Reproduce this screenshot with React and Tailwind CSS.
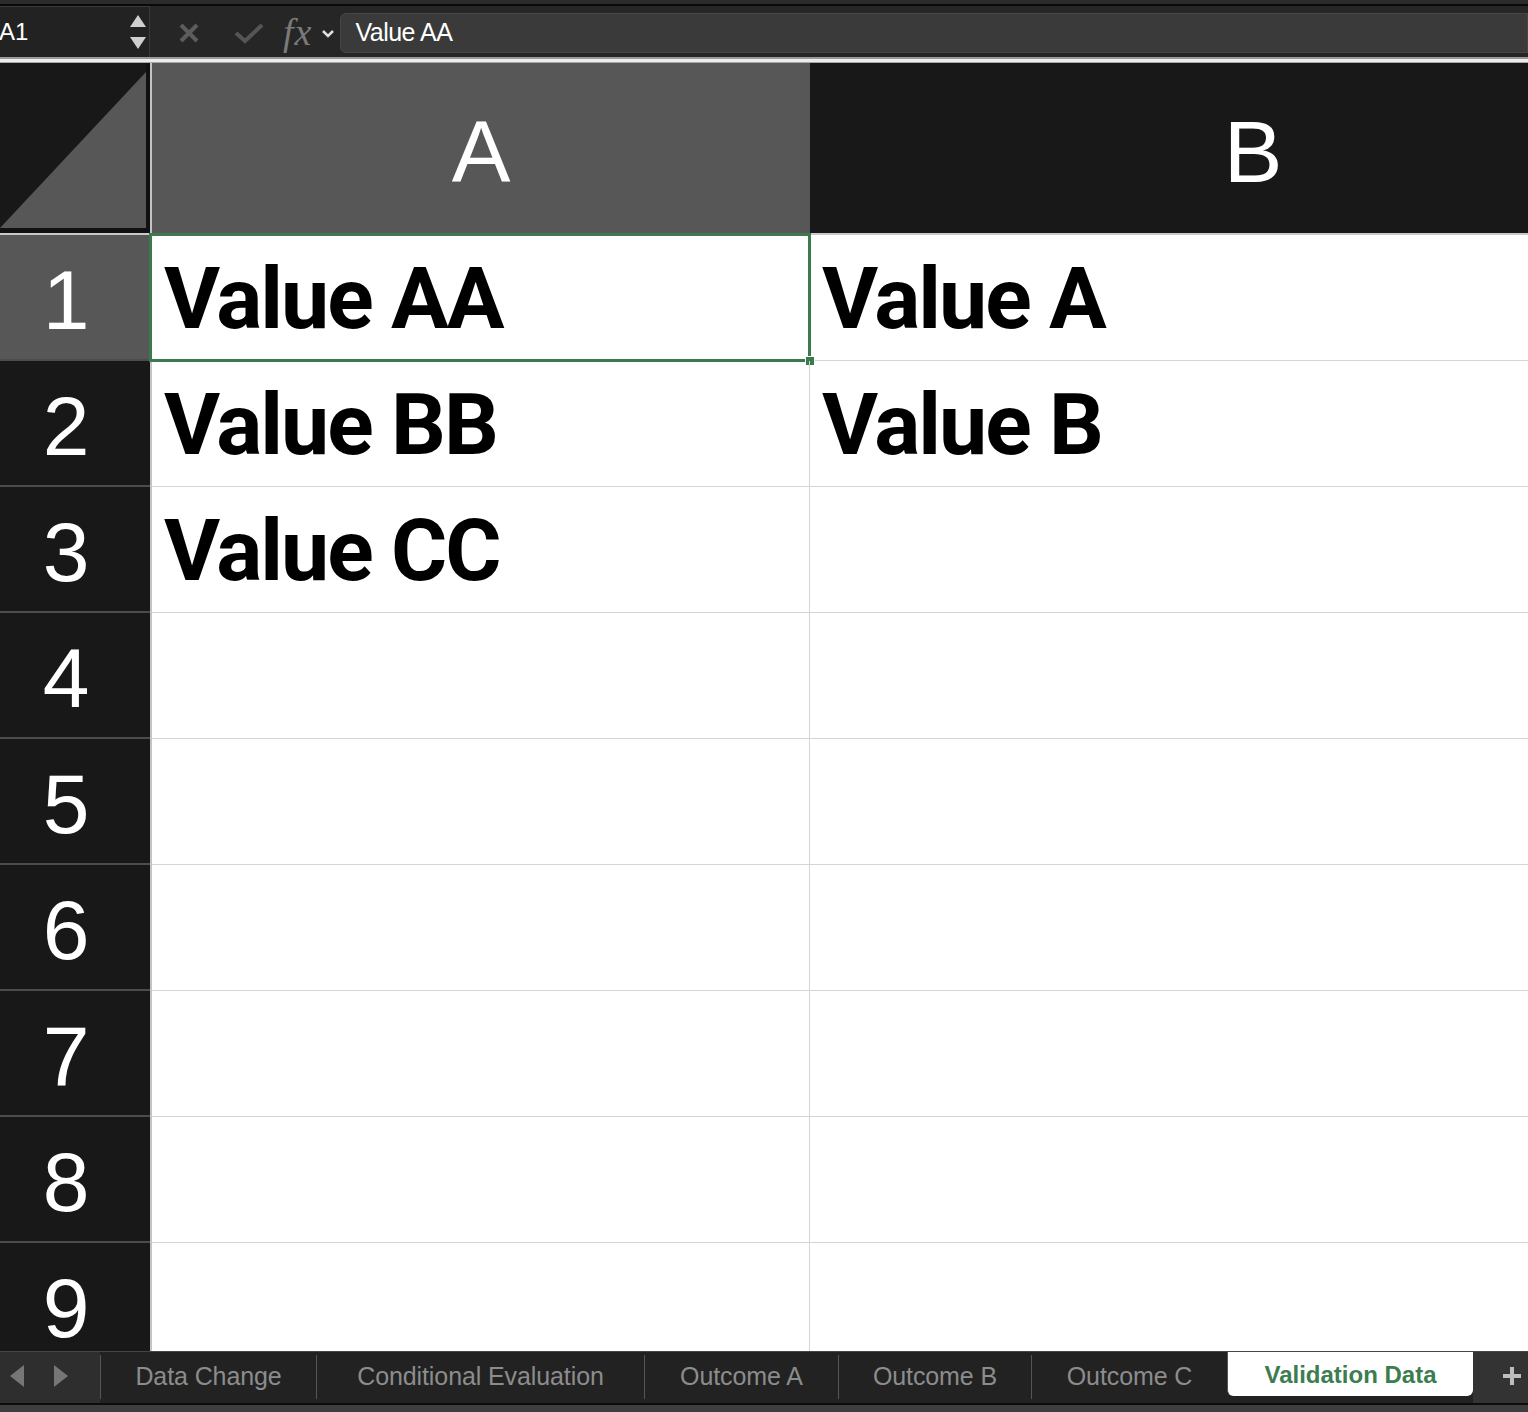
import React from "react";

const rows = [
  { n: 1, a: "Value AA", b: "Value A" },
  { n: 2, a: "Value BB", b: "Value B" },
  { n: 3, a: "Value CC", b: "" },
  { n: 4, a: "", b: "" },
  { n: 5, a: "", b: "" },
  { n: 6, a: "", b: "" },
  { n: 7, a: "", b: "" },
  { n: 8, a: "", b: "" },
  { n: 9, a: "", b: "" },
];

const tabs = [
  { label: "Data Change", w: "w-[216px]" },
  { label: "Conditional Evaluation", w: "w-[328px]" },
  { label: "Outcome A", w: "w-[194px]" },
  { label: "Outcome B", w: "w-[193px]" },
  { label: "Outcome C", w: "w-[196px]" },
];

export default function App() {
  return (
    <div className="w-[1528px] h-[1412px] overflow-hidden flex flex-col bg-white font-['Liberation_Sans',Arial,sans-serif]">
      {/* top strips */}
      <div className="h-[4px] bg-[#2b2b2b] shrink-0" />
      <div className="h-[2px] bg-[#0a0a0a] shrink-0" />

      {/* formula bar */}
      <div className="h-[51px] shrink-0 bg-[#262626] flex items-center">
        <div className="w-[150px] h-[51px] flex items-center justify-between border-t border-r border-[#3a3a3a] bg-[#222222] pr-[2px]">
          <span className="text-white text-[24px] leading-none -ml-[1px]">A1</span>
          <div className="flex flex-col gap-[10px] items-center mr-[1px]">
            <svg width="16" height="12" viewBox="0 0 16 12">
              <polygon points="8,0 16,12 0,12" fill="#cfcfcf" />
            </svg>
            <svg width="16" height="12" viewBox="0 0 16 12">
              <polygon points="0,0 16,0 8,12" fill="#cfcfcf" />
            </svg>
          </div>
        </div>
        <div className="w-[58px] flex justify-center ml-[10px] pt-[3px]">
          <svg width="22" height="22" viewBox="0 0 22 22">
            <path d="M3 3 L19 19 M19 3 L3 19" stroke="#5c5c5c" strokeWidth="4" />
          </svg>
        </div>
        <div className="w-[62px] flex justify-center pt-[3px]">
          <svg width="30" height="22" viewBox="0 0 30 22">
            <path d="M2 11 L11 19 L28 3" stroke="#555555" strokeWidth="4" fill="none" />
          </svg>
        </div>
        <span className="ml-[3px] text-[#7a7a7a] text-[38px] italic leading-none font-['Liberation_Serif',serif] tracking-[1px]">
          fx
        </span>
        <svg width="14" height="10" viewBox="0 0 14 10" className="ml-[9px] mt-[4px]">
          <path d="M2 2 L7 7 L12 2" stroke="#e0e0e0" strokeWidth="2.5" fill="none" />
        </svg>
        <div className="ml-[5px] flex-1 h-[40px] mt-[2px] bg-[#3a3a3a] border border-[#474747] rounded-l-[6px] flex items-center pl-[14px]">
          <span className="text-white text-[25px] leading-none tracking-[-0.5px]">Value AA</span>
        </div>
      </div>

      {/* separator line under formula bar */}
      <div className="h-[2px] bg-[#9a9a9a] shrink-0" />
      <div className="h-[3px] bg-[#ededed] shrink-0" />
      <div className="h-[1px] bg-[#a8a8a8] shrink-0" />

      {/* grid */}
      <div className="flex-1 overflow-hidden flex flex-col">
        {/* header row */}
        <div className="h-[172px] shrink-0 flex border-b-2 border-[#c9c9c9]">
          <div className="w-[152px] shrink-0 bg-[#181818] border-r-2 border-[#c4c4c4]">
            <svg width="150" height="170" viewBox="0 0 150 170">
              <polygon points="0,165 146,9 146,165" fill="#575757" />
              <rect x="146" y="0" width="4" height="170" fill="#111111" />
              <rect x="0" y="165" width="150" height="5" fill="#111111" />
            </svg>
          </div>
          <div className="w-[658px] shrink-0 bg-[#575757] flex items-center justify-center pt-[8px] text-white text-[88px] leading-none">
            A
          </div>
          <div className="w-[886px] shrink-0 bg-[#181818] flex items-center justify-center pt-[8px] text-white text-[88px] leading-none">
            B
          </div>
        </div>

        {rows.map((r) => (
          <div key={r.n} className="h-[126px] shrink-0 flex">
            <div
              className={`w-[152px] shrink-0 border-r-2 border-[#c4c4c4] ${
                r.n === 1 ? "bg-[#575757]" : "bg-[#181818]"
              } flex flex-col`}
            >
              <div className="flex-1 flex items-center justify-center pr-[18px] pt-[6px] text-white text-[84px] leading-none">
                {r.n}
              </div>
              <div className="h-[2px] bg-[#4c4c4c]" />
            </div>
            <div className="relative w-[658px] shrink-0 border-r border-b border-[#d4d4d4] flex items-center px-[12px] pt-[2px]">
              <span className="font-['Roboto',sans-serif] font-bold text-[86px] leading-none tracking-[-2px] text-black">
                {r.a}
              </span>
              {r.n === 1 && (
                <>
                  <div className="absolute -left-[3px] -top-[2px] -right-[2px] -bottom-[2px] border-[3px] border-[#3b7a4f]" />
                  <div className="absolute -right-[6px] -bottom-[6px] w-[10px] h-[10px] bg-[#3b7a4f] border border-white" />
                </>
              )}
            </div>
            <div className="w-[886px] shrink-0 border-b border-[#d4d4d4] flex items-center px-[12px] pt-[2px]">
              <span className="font-['Roboto',sans-serif] font-bold text-[86px] leading-none tracking-[-2px] text-black">
                {r.b}
              </span>
            </div>
          </div>
        ))}
      </div>

      {/* tab bar */}
      <div className="h-[1px] bg-[#454545] shrink-0" />
      <div className="h-[51px] shrink-0 bg-[#222222] flex items-start">
        <div className="w-[100px] h-full bg-[#2e2e2e] flex items-center gap-[30px] pl-[10px] pb-[4px]">
          <svg width="14" height="22" viewBox="0 0 14 22">
            <polygon points="14,0 14,22 0,11" fill="#767676" />
          </svg>
          <svg width="14" height="22" viewBox="0 0 14 22">
            <polygon points="0,0 0,22 14,11" fill="#767676" />
          </svg>
        </div>
        {tabs.map((t) => (
          <div key={t.label} className={`${t.w} h-[44px] flex items-center justify-center border-l border-[#555555] mt-[3px] -mb-[3px]`}>
            <span className="text-[#8c8c8c] text-[25px] leading-none mt-[-2px] tracking-[-0.1px]">{t.label}</span>
          </div>
        ))}
        <div className="w-[246px] h-[44px] bg-white rounded-b-[6px] border-l border-[#555555] flex items-center justify-center">
          <span className="text-[#3b7d4f] text-[24px] font-bold leading-none mt-[2px]">Validation Data</span>
        </div>
        <div className="flex-1 h-full bg-[#333333] flex items-center justify-end pr-[5px] pb-[4px]">
          <svg width="22" height="22" viewBox="0 0 22 22">
            <path d="M11 2 V20 M2 11 H20" stroke="#bdbdbd" strokeWidth="4" />
          </svg>
        </div>
      </div>
      <div className="h-[2px] bg-[#0c0c0c] shrink-0" />
      <div className="h-[7px] bg-[#3e3e3e] shrink-0" />
    </div>
  );
}
